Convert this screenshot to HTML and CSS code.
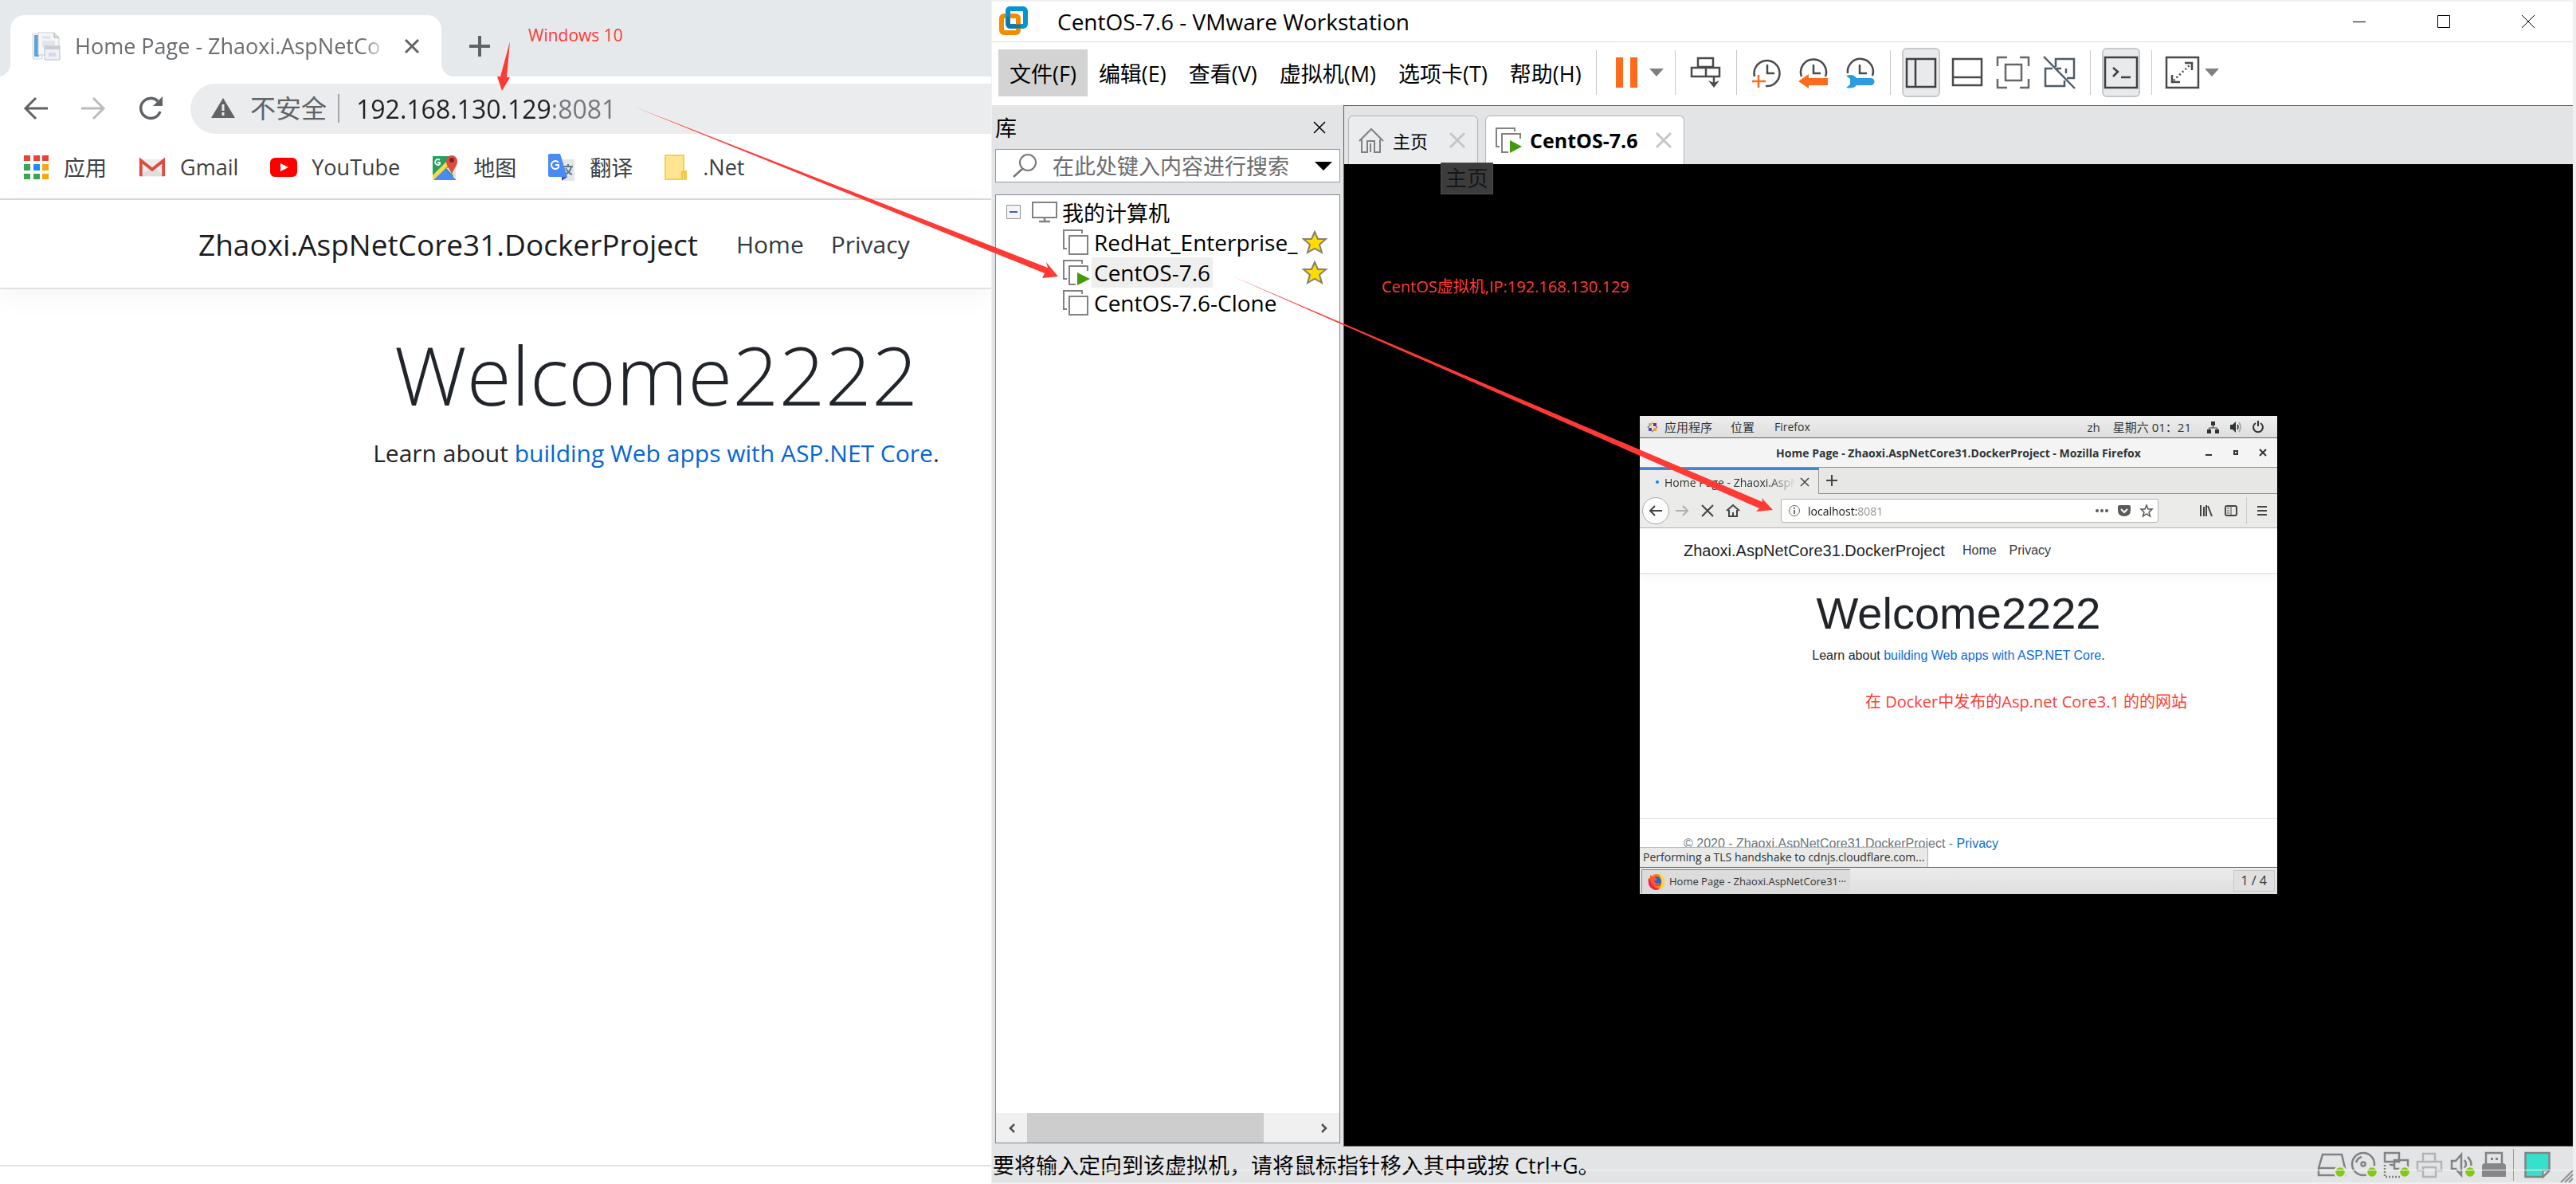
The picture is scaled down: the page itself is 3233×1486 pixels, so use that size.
FILE: index.html
```html
<!DOCTYPE html>
<html lang="zh-CN">
<head>
<meta charset="utf-8">
<title>CentOS-7.6 - VMware Workstation</title>
<link rel="stylesheet" href="styles.css">
</head>
<body>
<div class="desktop">

  <!-- Host browser -->
  <section class="chrome">
    <header class="tabstrip">
      <div class="tab">
        <svg class="favicon" viewBox="0 0 36 36"><path d="M1 2h12v32H1z" fill="#f3f6f8" stroke="#cdd5da"/><path d="M3 4h6v27H3z" fill="#5ea2d6"/><path d="M8 1h20l6 6v22H8z" fill="#f5f6f7" stroke="#c9ced2"/><path d="M28 1v6h6" fill="#ddd" stroke="#aaa"/><path d="M13 5h10v4H13zM13 11h16v8H13z" fill="#e1e5e8"/><path d="M16 18h19v17H16z" fill="#eef0f4" stroke="#b9bec8"/><path d="M16 18h19v4H16z" fill="#c9ccd2"/><path d="M21 26h9v5h-9z" fill="#d5d9ea"/></svg>
        <span class="tab-title">Home Page - Zhaoxi.AspNetCo</span>
        <button class="icon-btn" aria-label="关闭标签页"><svg width="20" height="20" viewBox="0 0 20 20"><path d="M2 2l16 16M18 2L2 18" stroke="#5f6368" stroke-width="3"/></svg></button>
      </div>
      <button class="icon-btn new-tab" aria-label="新标签页"><svg width="28" height="28" viewBox="0 0 28 28"><path d="M14 1v26M1 14h26" stroke="#5f6368" stroke-width="4"/></svg></button>
    </header>
    <div class="navbar">
      <button class="icon-btn" aria-label="后退"><svg width="30" height="30" viewBox="0 0 30 30"><path d="M30 15H3M15 2L2 15l13 13" fill="none" stroke="#5f6368" stroke-width="3"/></svg></button>
      <button class="icon-btn" aria-label="前进"><svg width="30" height="30" viewBox="0 0 30 30"><path d="M0 15h27M15 2l13 13-13 13" fill="none" stroke="#babcbe" stroke-width="3"/></svg></button>
      <button class="icon-btn" aria-label="刷新"><svg width="32" height="32" viewBox="0 0 32 32"><path d="M27 20A12.500 12.500 0 1 1 24 7" fill="none" stroke="#5f6368" stroke-width="3.500"/><path d="M30 1v12H18z" fill="#5f6368"/></svg></button>
      <div class="omnibox">
        <svg width="30" height="26" viewBox="0 0 30 26"><path d="M15 0l15 25H0z" fill="#5f6368"/><path d="M15 8v8M15 18v4" stroke="#ebecee" stroke-width="3"/></svg>
        <span class="insecure">不安全</span>
        <input class="url" type="text" aria-label="地址" value="192.168.130.129:8081">
      </div>
    </div>
    <nav class="bookmarks">
      <a href="#"><svg width="32" height="32" viewBox="0 0 32 32"><path fill="#ea4335" d="M0 1h8v7H0zM12 1h8v7h-8zM23 1h8v7h-8z"/><path fill="#34a853" d="M0 12h8v8H0zM0 24h8v7H0zM12 24h8v7h-8z"/><path fill="#1a8cff" d="M12 12h8v8h-8z"/><path fill="#f5a80c" d="M23 12h8v8h-8zM23 24h8v7h-8z"/></svg>应用</a>
      <a href="#"><svg width="34" height="32" viewBox="0 0 36 32"><path d="M2 5h32v23H2z" fill="#ececec"/><path d="M2 28l16-14 16 14z" fill="#dedede"/><path d="M3 28V7l15 12L33 7v21" fill="none" stroke="#dd4b3e" stroke-width="4"/></svg>Gmail</a>
      <a href="#"><svg width="34" height="32" viewBox="0 0 34 32"><rect y="4" width="34" height="24" rx="6" fill="#f00"/><path d="M13 11l10 5-10 5z" fill="#fff"/></svg>YouTube</a>
      <a href="#"><svg width="34" height="34" viewBox="0 0 34 34"><path d="M1 3h26v29H1z" fill="#25a05b"/><path d="M2 33l14-14 15 14z" fill="#4a8af4"/><path d="M1 27L23 5l4 4L2 33H1z" fill="#fbd74b"/><path d="M18 18l12 13V15z" fill="#dfe1e4"/><path d="M25 27c-1-8-7-10-7-18a7 7 0 0 1 14 0c0 8-6 10-7 18z" fill="#dc4b3e"/><circle cx="25" cy="8" r="3" fill="#7e251f"/><path d="M10 8a3.500 3.500 0 1 0 0 5v-2H7" fill="none" stroke="#fff" stroke-width="1.800"/></svg>地图</a>
      <a href="#"><svg width="34" height="36" viewBox="0 0 34 36"><path d="M12 8h21v27H20z" fill="#e4e6e8"/><path d="M0 3q0-2 2-2h13l9 29H2q-2 0-2-2z" fill="#4a8af4"/><path d="M17 30h7l-7 5z" fill="#3a55b5"/><path d="M13 12a5 5 0 1 0 0 6v-3H9" fill="none" stroke="#fff" stroke-width="2"/><path d="M20 17h11M25 14v3M29 17q-1 7-8 10M22 19q3 6 8 8" fill="none" stroke="#5c7d88" stroke-width="2"/></svg>翻译</a>
      <a href="#"><svg width="30" height="34" viewBox="0 0 30 34"><path d="M1 2h23v20h3v10H1z" fill="#ffe58f" stroke="#f5cf52" stroke-width="2"/><path d="M22 32v-9h3v9" fill="#ffe58f" stroke="#f0c53c" stroke-width="2"/></svg>.Net</a>
    </nav>
    <main class="site">
      <nav class="site-nav">
        <a class="brand" href="#">Zhaoxi.AspNetCore31.DockerProject</a>
        <a href="#">Home</a>
        <a href="#">Privacy</a>
      </nav>
      <div class="hero">
        <h1>Welcome2222</h1>
        <p>Learn about <a href="#">building Web apps with ASP.NET Core</a>.</p>
      </div>
    </main>
  </section>

  <!-- Virtual machine manager -->
  <section class="vmware">
    <header class="titlebar">
      <svg width="38" height="38" viewBox="0 0 38 38"><rect x="12" y="3" width="22" height="22" rx="3" fill="none" stroke="#0095d3" stroke-width="6"/><rect x="4" y="12" width="21" height="21" rx="3" fill="none" stroke="#f38b00" stroke-width="6"/><path d="M12 10v12q0 3 3 3h13" fill="none" stroke="#1574a8" stroke-width="5"/><path d="M12 13v-7q0-3 3-3h5" fill="none" stroke="#0095d3" stroke-width="6"/></svg>
      <span class="title">CentOS-7.6 - VMware Workstation</span>
      <div class="win-buttons">
        <button class="icon-btn" aria-label="最小化"><svg width="16" height="16" viewBox="0 0 16 16"><path d="M0 8.500h16" stroke="#000"/></svg></button>
        <button class="icon-btn" aria-label="最大化"><svg width="16" height="16" viewBox="0 0 16 16"><path d="M.5.5h15v15H.5z" fill="none" stroke="#000"/></svg></button>
        <button class="icon-btn" aria-label="关闭"><svg width="16" height="16" viewBox="0 0 16 16"><path d="M0 0l16 16M16 0L0 16" stroke="#000"/></svg></button>
      </div>
    </header>
    <div class="menubar">
      <button class="menu open">文件(F)</button>
      <button class="menu">编辑(E)</button>
      <button class="menu">查看(V)</button>
      <button class="menu">虚拟机(M)</button>
      <button class="menu">选项卡(T)</button>
      <button class="menu">帮助(H)</button>
      <div class="tools">
        <div class="group">
          <button class="tool" aria-label="挂起"><svg viewBox="0 0 42 42"><path d="M7 2h9v38H7zM25 2h9v38h-9z" fill="#ff6b1c"/></svg></button>
          <button class="caret" aria-label="电源选项"><svg width="18" height="10" viewBox="0 0 18 10"><path d="M0 0h18L9 10z" fill="#808080"/></svg></button>
        </div>
        <div class="group">
          <button class="tool" aria-label="发送 Ctrl+Alt+Del"><svg viewBox="0 0 42 42" fill="none" stroke="#4a4a4c" stroke-width="2.500"><path d="M11 3h19v11H11zM3 15h35v11H3zM21 15v11M31 26v11"/><path d="M24 31l7 9 7-9-7 3z" fill="#4a4a4c" stroke="none"/></svg></button>
        </div>
        <div class="group">
          <button class="tool" aria-label="拍摄快照"><svg viewBox="0 0 42 42" fill="none" stroke="#4a4a4c" stroke-width="2.500"><path d="M5 26a16 16 0 1 1 14 12M21 11v11h9"/><path d="M2 32h17M10 24v16" stroke="#ff6b1c"/></svg></button>
          <button class="tool" aria-label="恢复快照"><svg viewBox="0 0 42 42" fill="none" stroke="#4a4a4c" stroke-width="2.500"><path d="M6 26a16 16 0 1 1 30 0M21 11v11h9"/><path d="M2 32l13-9v5h24v9H15v4z" fill="#ff6b1c" stroke="none"/></svg></button>
          <button class="tool" aria-label="管理快照"><svg viewBox="0 0 42 42" fill="none" stroke="#4a4a4c" stroke-width="2.500"><path d="M6 22a16 16 0 1 1 31 3M21 11v11h9"/><path d="M4 25q9-3 13 3h18a4 4 0 0 1 0 9H17q-4 5-13 3l5-4v-7z" fill="#2b9ce0" stroke="none"/></svg></button>
        </div>
        <div class="group">
          <button class="tool on" aria-label="显示库"><svg viewBox="0 0 42 42" fill="none" stroke="#3f4042" stroke-width="2.500"><path d="M3 4h36v35H3zM14 4v35"/></svg></button>
          <button class="tool" aria-label="缩略图栏"><svg viewBox="0 0 42 42" fill="none" stroke="#4a4a4c" stroke-width="2.500"><path d="M3 4h36v33H3zM3 27h36"/></svg></button>
          <button class="tool" aria-label="控制台视图"><svg viewBox="0 0 42 42" fill="none" stroke="#66676a" stroke-width="2.500"><path d="M1 13V2h12M29 2h11v11M40 29v11H29M13 40H1V29M11 11h20v20H11z"/></svg></button>
          <button class="tool" aria-label="Unity"><svg viewBox="0 0 42 42" fill="none" stroke="#4f5b66" stroke-width="2.500"><path d="M16 14V4h23v24h-9M12 16H3v22h24v-7M17 16h6M29 22v-6M1 1l39 40"/></svg></button>
        </div>
        <div class="group">
          <button class="tool on" aria-label="控制台"><svg viewBox="0 0 42 42" fill="none" stroke="#3f4042" stroke-width="2.500"><path d="M1 2h40v38H1zM11 15l6 5-6 6M21 27h12"/></svg></button>
        </div>
        <div class="group">
          <button class="tool" aria-label="全屏"><svg viewBox="0 0 42 42" fill="none" stroke="#4a4a4c" stroke-width="2.500"><path d="M1 2h40v38H1zM24 9h9v9M8 24v9h10"/><path d="M10 31L32 10" stroke-dasharray="2 3"/></svg></button>
          <button class="caret" aria-label="拉伸选项"><svg width="18" height="10" viewBox="0 0 18 10"><path d="M0 0h18L9 10z" fill="#808080"/></svg></button>
        </div>
      </div>
    </div>

    <div class="workspace">
      <aside class="library">
        <div class="lib-head">库
          <button class="icon-btn" aria-label="关闭库"><svg width="16" height="16" viewBox="0 0 16 16"><path d="M1 1l14 14M15 1L1 15" stroke="#000" stroke-width="1.500"/></svg></button>
        </div>
        <div class="search">
          <svg width="32" height="30" viewBox="0 0 32 30"><circle cx="19" cy="11" r="10" fill="none" stroke="#777" stroke-width="2"/><path d="M12 19L1 29" stroke="#777" stroke-width="2.500"/></svg>
          <input type="text" aria-label="搜索" placeholder="在此处键入内容进行搜索">
          <button class="icon-btn" aria-label="搜索选项"><svg width="22" height="11" viewBox="0 0 22 11"><path d="M0 0h22L11 11z" fill="#000"/></svg></button>
        </div>
        <div class="tree">
          <div class="row root">
            <svg width="18" height="18" viewBox="0 0 18 18"><path d="M.5.5h17v17H.5z" fill="#f4f4f4" stroke="#919191"/><path d="M4 9h10" stroke="#4060b0" stroke-width="2"/></svg>
            <svg class="monitor" width="32" height="26" viewBox="0 0 32 26"><path d="M1 1h30v19H1z" fill="#fff" stroke="#828282" stroke-width="2"/><path d="M16 20v4M9 25h14" stroke="#828282" stroke-width="2.500"/></svg>
            <span>我的计算机</span>
          </div>
          <div class="row">
            <svg width="32" height="32" viewBox="0 0 32 32" fill="none" stroke="#828282" stroke-width="2"><path d="M5 24H1V1h23v4M8 8h23v23H8z"/></svg>
            <span class="name">RedHat_Enterprise_</span>
            <svg class="star" width="32" height="30" viewBox="0 0 32 30"><path d="M16 2l4 9h10l-8 7 3 10-9-5-9 5 3-10-8-7h10z" fill="#ffdc00" stroke="#857f6e" stroke-width="2"/></svg>
          </div>
          <div class="row">
            <svg width="32" height="32" viewBox="0 0 32 32" fill="none" stroke="#828282" stroke-width="2"><path d="M5 24H1V1h23v4M31 14V8H8v23h8"/><path d="M18 16l16 8-16 8z" fill="#449a0b" stroke="none"/></svg>
            <span class="name selected">CentOS-7.6</span>
            <svg class="star" width="32" height="30" viewBox="0 0 32 30"><path d="M16 2l4 9h10l-8 7 3 10-9-5-9 5 3-10-8-7h10z" fill="#ffdc00" stroke="#857f6e" stroke-width="2"/></svg>
          </div>
          <div class="row">
            <svg width="32" height="32" viewBox="0 0 32 32" fill="none" stroke="#828282" stroke-width="2"><path d="M5 24H1V1h23v4M8 8h23v23H8z"/></svg>
            <span class="name">CentOS-7.6-Clone</span>
          </div>
          <div class="scrollbar">
            <button class="icon-btn" aria-label="向左滚动"><svg width="8" height="12" viewBox="0 0 8 12"><path d="M7 1L2 6l5 5" fill="none" stroke="#505050" stroke-width="2.500"/></svg></button>
            <div class="track"><div class="thumb"></div></div>
            <button class="icon-btn" aria-label="向右滚动"><svg width="8" height="12" viewBox="0 0 8 12"><path d="M1 1l5 5-5 5" fill="none" stroke="#505050" stroke-width="2.500"/></svg></button>
          </div>
        </div>
      </aside>

      <div class="console">
        <div class="vm-tabs">
          <div class="vm-tab home">
            <svg width="32" height="32" viewBox="0 0 32 32" fill="none" stroke="#808080" stroke-width="2"><path d="M1 17L16 2l15 15M4 15v16h7V17h9v14h7V15M15 20v11"/></svg>
            <span>主页</span>
            <button class="icon-btn" aria-label="关闭主页"><svg width="20" height="20" viewBox="0 0 20 20"><path d="M1 1l18 18M19 1L1 19" stroke="#c6c6c8" stroke-width="3"/></svg></button>
            <div class="tooltip">主页</div>
          </div>
          <div class="vm-tab active">
            <svg width="32" height="32" viewBox="0 0 32 32" fill="none" stroke="#828282" stroke-width="2"><path d="M5 24H1V1h23v4M31 14V8H8v23h8"/><path d="M18 16l15 8-15 8z" fill="#449a0b" stroke="none"/></svg>
            <span>CentOS-7.6</span>
            <button class="icon-btn" aria-label="关闭 CentOS-7.6"><svg width="20" height="20" viewBox="0 0 20 20"><path d="M1 1l18 18M19 1L1 19" stroke="#c6c6c8" stroke-width="3"/></svg></button>
          </div>
        </div>
        <div class="screen">
          <div class="guest">
            <div class="g-panel">
              <svg width="14" height="14" viewBox="0 0 14 14"><path d="M7 0l2 3H5z" fill="#e8b53a"/><path d="M2 2h4v4H2z" fill="#a6c957"/><path d="M8 2h4v4H8z" fill="#932279"/><path d="M2 8h4v4H2z" fill="#4a4a98"/><path d="M8 8h4v4H8z" fill="#efa724"/><path d="M7 14l2-3H5zM0 7l3-2v4zM14 7l-3-2v4z" fill="#b070a8"/></svg>
              <span>应用程序</span><span>位置</span><span class="app">Firefox</span>
              <span class="zh">zh</span><span class="clock">星期六 01：21</span>
              <svg width="16" height="16" viewBox="0 0 16 16"><path d="M5 1h5v5H5zM0 11h5v5H0zM10 11h5v5h-5z" fill="#2e3436"/><path d="M7.500 5v4M2.500 12V9h10v3" fill="none" stroke="#2e3436"/></svg>
              <svg width="16" height="16" viewBox="0 0 16 16"><path d="M1 5h3l4-4v14l-4-4H1z" fill="#2e3436"/><path d="M10 5q2 3 0 6" fill="none" stroke="#2e3436" stroke-width="1.500"/><path d="M12 2q4 6 0 12" fill="none" stroke="#aaa" stroke-width="2"/></svg>
              <svg width="16" height="16" viewBox="0 0 16 16"><path d="M5 3a6 6 0 1 0 6 0M8 0v7" fill="none" stroke="#2e3436" stroke-width="2"/></svg>
            </div>
            <div class="g-title"><span>Home Page - Zhaoxi.AspNetCore31.DockerProject - Mozilla Firefox</span>
              <div class="g-controls">
                <button class="icon-btn" aria-label="最小化"><svg width="8" height="8" viewBox="0 0 8 8"><path d="M0 7h8" stroke="#2e3436" stroke-width="2"/></svg></button>
                <button class="icon-btn" aria-label="最大化"><svg width="8" height="8" viewBox="0 0 8 8"><path d="M2 2h4v4H2z" fill="none" stroke="#2e3436" stroke-width="2"/></svg></button>
                <button class="icon-btn" aria-label="关闭"><svg width="8" height="8" viewBox="0 0 8 8"><path d="M0 0l8 8M8 0L0 8" stroke="#2e3436" stroke-width="2"/></svg></button>
              </div>
            </div>
            <div class="g-tabs">
              <div class="g-tab"><i class="dot"></i><span>Home Page - Zhaoxi.AspN</span>
                <button class="icon-btn" aria-label="关闭标签页"><svg width="10" height="10" viewBox="0 0 10 10"><path d="M0 0l10 10M10 0L0 10" stroke="#444" stroke-width="1.500"/></svg></button></div>
              <div class="g-tabfill"><button class="icon-btn" aria-label="新标签页"><svg width="14" height="14" viewBox="0 0 14 14"><path d="M7 0v14M0 7h14" stroke="#444" stroke-width="2"/></svg></button></div>
            </div>
            <div class="g-toolbar">
              <button class="g-back" aria-label="后退"><svg width="18" height="16" viewBox="0 0 18 16"><path d="M17 8H2M8 2L2 8l6 6" fill="none" stroke="#444" stroke-width="2"/></svg></button>
              <button class="icon-btn" aria-label="前进"><svg width="16" height="16" viewBox="0 0 16 16"><path d="M0 8h15M9 2l6 6-6 6" fill="none" stroke="#b0b0b0" stroke-width="2"/></svg></button>
              <button class="icon-btn" aria-label="停止"><svg width="16" height="16" viewBox="0 0 16 16"><path d="M1 1l14 14M15 1L1 15" stroke="#444" stroke-width="2"/></svg></button>
              <button class="icon-btn" aria-label="主页"><svg width="16" height="16" viewBox="0 0 16 16"><path d="M0 8l8-7 8 7M3 7v8h10V7M8 15v-5" fill="none" stroke="#444" stroke-width="2"/></svg></button>
              <div class="g-url">
                <svg width="14" height="14" viewBox="0 0 14 14"><circle cx="7" cy="7" r="6.500" fill="none" stroke="#666"/><path d="M7 6v5M7 3v2" stroke="#444" stroke-width="1.500"/></svg>
                <input type="text" aria-label="地址" value="localhost:8081">
                <svg width="16" height="16" viewBox="0 0 16 16" fill="#555"><circle cx="2" cy="8" r="2"/><circle cx="8" cy="8" r="2"/><circle cx="14" cy="8" r="2"/></svg>
                <svg width="16" height="16" viewBox="0 0 16 16"><path d="M0 3q0-2 2-2h12q2 0 2 2v4q0 8-8 8T0 7z" fill="#5a5a5a"/><path d="M4 6l4 4 4-4" fill="none" stroke="#fff" stroke-width="2"/></svg>
                <svg width="16" height="16" viewBox="0 0 16 16"><path d="M8 1l2 5h5l-4 4 1.500 5L8 12l-4.500 3L5 10 1 6h5z" fill="none" stroke="#555" stroke-width="1.500"/></svg>
              </div>
              <div class="g-right">
                <svg width="16" height="16" viewBox="0 0 16 16"><path d="M1 1v14M5 3v12M8 1v14M10 2l5 13" fill="none" stroke="#444" stroke-width="2"/></svg>
                <svg width="16" height="16" viewBox="0 0 16 16"><rect x="1" y="2" width="14" height="12" rx="2" fill="none" stroke="#444" stroke-width="2"/><path d="M8 2v12M3 5h3M3 8h3M3 11h3" stroke="#444"/></svg>
                <button class="g-menu" aria-label="菜单"><svg width="12" height="14" viewBox="0 0 12 14"><path d="M0 2h12M0 7h12M0 12h12" stroke="#444" stroke-width="2"/></svg></button>
              </div>
            </div>
            <div class="g-page">
              <nav class="g-nav"><a class="g-brand" href="#">Zhaoxi.AspNetCore31.DockerProject</a><a href="#">Home</a><a href="#">Privacy</a></nav>
              <div class="g-hero">
                <h2>Welcome2222</h2>
                <p>Learn about <a href="#">building Web apps with ASP.NET Core</a>.</p>
              </div>
              <footer class="g-footer">© 2020 - Zhaoxi.AspNetCore31.DockerProject - <a href="#">Privacy</a></footer>
              <div class="g-status">Performing a TLS handshake to cdnjs.cloudflare.com...</div>
            </div>
            <div class="g-taskbar">
              <button class="g-task"><svg width="22" height="24" viewBox="0 0 22 24"><circle cx="11" cy="13" r="10" fill="#ff7a18"/><path d="M14 1q8 6 7 13-1 8-9 9 7-5 5-12z" fill="#ffd92e"/><path d="M1 8q-2 12 8 15 4 0 6-2-9 0-9-9z" fill="#f0244e"/><circle cx="11" cy="12" r="6" fill="#2a62d8"/><path d="M3 4q2 3 6 3l3 3-4 2q2 4 7 2-3 6-9 2Q2 12 3 4z" fill="#ff5a22"/></svg>Home Page - Zhaoxi.AspNetCore31···</button>
              <span class="g-ws">1 / 4</span>
            </div>
          </div>
        </div>
      </div>
    </div>

    <footer class="statusbar">
      <span>要将输入定向到该虚拟机，请将鼠标指针移入其中或按 Ctrl+G。</span>
      <div class="devices">
        <svg viewBox="0 0 36 34" fill="none" stroke="#828282" stroke-width="2.500"><path d="M7 4h24l4 17v9H2v-9zM2 21h33"/><circle cx="29" cy="26" r="7" fill="#84c817" stroke="#e3e4e6"/></svg>
        <svg viewBox="0 0 36 34" fill="none" stroke="#828282" stroke-width="2.500"><circle cx="17" cy="16" r="14"/><circle cx="17" cy="16" r="2.500"/><path d="M8 14q2-6 7-7"/><circle cx="28" cy="26" r="7" fill="#84c817" stroke="#e3e4e6"/></svg>
        <svg viewBox="0 0 36 34" fill="none" stroke="#828282" stroke-width="2.500"><path d="M3 2h18v11H3zM15 11h17v11H15zM9 17h6"/><path d="M3 17v15h20" stroke-dasharray="2 2"/><circle cx="28" cy="26" r="7" fill="#84c817" stroke="#e3e4e6"/></svg>
        <svg viewBox="0 0 36 34" fill="none" stroke="#b4b4b6" stroke-width="2.500"><path d="M10 13V3h15v10M10 24H3V13h30v11h-7M10 20h16v12H10z"/></svg>
        <svg viewBox="0 0 36 34" fill="none" stroke="#828282" stroke-width="2.500"><path d="M5 12h5l7-8v26l-7-8H5zM21 11q4 5 0 10M25 7q6 6 4 12"/><circle cx="28" cy="26" r="7" fill="#84c817" stroke="#e3e4e6"/></svg>
        <svg viewBox="0 0 36 34"><path d="M7 15V2h20v13" fill="none" stroke="#828282" stroke-width="2.500"/><path d="M13 8h3v3h-3zM19 8h3v3h-3z" fill="#828282"/><path d="M2 19q0-4 4-4h22q4 0 4 4v13H2z" fill="#87878b"/></svg>
        <svg class="note" viewBox="0 0 36 34"><path d="M3 2h30v22l-8 8H3z" fill="#35e0cc" stroke="#828282" stroke-width="2.500"/><path d="M33 24h-8v8z" fill="#e3e4e6" stroke="#828282" stroke-width="2"/></svg>
      </div>
      <svg class="grip" width="16" height="16" viewBox="0 0 16 16"><path d="M1 16L16 1M6 16L16 6M11 16l5-5" stroke="#909090" stroke-width="2"/></svg>
    </footer>
  </section>

  <!-- Annotations -->
  <p class="note-text note-host">Windows 10</p>
  <p class="note-text note-vm">CentOS虚拟机,IP:192.168.130.129</p>
  <p class="note-text note-site">在 Docker中发布的Asp.net Core3.1 的的网站</p>
  <svg class="arrows" width="2300" height="700" viewBox="0 0 2300 700" fill="#ff3a35"><path d="M640 52L636 97h4l-10 17-6-18h4z"/><path d="M796 134L1315 336l-2-7 15 18-20 2 3-6z"/><path d="M1545 346L2212 630l-1-5 14 15-21 2 4-4z"/></svg>
</div>
</body>
</html>
```
FILE: styles.css
```css
* { box-sizing: border-box; }
body {
  margin: 0;
  font-family: "Open Sans", "Noto Sans CJK SC", sans-serif;
  color: #000;
}
button, input { font: inherit; color: inherit; border: 0; padding: 0; margin: 0; background: none; }
h1, h2, p { margin: 0; }
a { text-decoration: none; color: inherit; }
svg { display: block; flex: none; overflow: visible; }
.icon-btn { display: flex; align-items: center; justify-content: center; flex: none; }

.desktop {
  position: relative;
  display: grid;
  grid-template-columns: 1244fr 1989fr;
  min-height: 100vh;
  overflow: hidden;
  white-space: nowrap;
}

/* Host browser */
.chrome { display: flex; flex-direction: column; min-width: 0; overflow: hidden; background: #fff; padding-bottom: 22px; }
.tabstrip { display: flex; align-items: flex-end; height: 96px; padding-left: 13px; background: #e6e9ec; }
.tab {
  position: relative;
  display: flex;
  align-items: center;
  width: 541px;
  height: 77px;
  padding: 0 27px;
  gap: 18px;
  border-radius: 18px 18px 0 0;
  background: #fff;
}
.tab::before, .tab::after { content: ""; position: absolute; bottom: 0; width: 16px; height: 16px; }
.tab::before { left: -16px; background: radial-gradient(circle at 0 0, #e6e9ec 16px, #fff 16px); }
.tab::after { right: -16px; background: radial-gradient(circle at 100% 0, #e6e9ec 16px, #fff 16px); }
.favicon { width: 36px; height: 36px; }
.tab-title {
  flex: 1;
  min-width: 0;
  overflow: hidden;
  font-size: 27px;
  color: #6a6d71;
  -webkit-mask-image: linear-gradient(90deg, #000 360px, transparent 394px);
  mask-image: linear-gradient(90deg, #000 360px, transparent 394px);
}
.new-tab { height: 77px; margin-left: 34px; }
.navbar { display: flex; align-items: center; height: 80px; padding-left: 30px; gap: 42px; }
.omnibox {
  display: flex;
  align-items: center;
  flex: 1;
  height: 63px;
  margin-left: -9px;
  padding-left: 26px;
  border-radius: 32px 0 0 32px;
  background: #ebecee;
}
.insecure { margin-left: 19px; padding-right: 14px; border-right: 2px solid #a3a5a8; font-size: 32px; line-height: 36px; color: #5f6368; }
.url {
  flex: 1;
  min-width: 0;
  margin-left: 21px;
  font-size: 32px;
  color: transparent;
  background: linear-gradient(90deg, #202124 244px, #73767a 244px);
  -webkit-background-clip: text;
  background-clip: text;
}
.bookmarks { display: flex; align-items: center; height: 75px; padding: 0 0 6px 30px; gap: 40px; border-bottom: 2px solid #d8dade; font-size: 27px; color: #3c4043; }
.bookmarks a { display: flex; align-items: center; gap: 18px; }
.site { flex: 1; border-bottom: 2px solid #dfe3e8; }
.site-nav {
  display: flex;
  align-items: center;
  height: 112px;
  padding: 0 0 0 249px;
  gap: 34px;
  border-bottom: 2px solid #dee2e6;
  box-shadow: 0 8px 32px rgba(0, 0, 0, .05);
  font-size: 30px;
  color: #343a40;
}
.brand { margin-right: 14px; font-size: 37px; color: #1b1c1e; }
.hero { padding: 31px 0 0 403px; text-align: center; color: #212529; }
.hero h1 { font-size: 102px; font-weight: 300; line-height: 152px; }
.hero p { font-size: 30px; line-height: 46px; }
.hero a { color: #0366d6; }

/* Virtual machine manager */
.vmware { display: flex; flex-direction: column; min-width: 0; background: #e3e4e6; border: solid #f0f0f2; border-width: 2px 4px 2px 1px; }
.titlebar { display: flex; align-items: center; height: 51px; padding-left: 8px; background: #fff; border-bottom: 1px solid #e0e0e0; font-size: 28px; }
.title { margin-left: 36px; line-height: 48px; }
.win-buttons { display: flex; gap: 90px; margin-left: auto; padding-right: 48px; }
.menubar { display: flex; align-items: center; height: 79px; padding: 0 0 3px 8px; background: #fff; font-size: 27px; }
.menu { flex: none; height: 59px; padding: 0 14px; }
.menu.open { background: #d3d3d3; }
.tools { display: flex; align-items: center; margin-left: 4px; }
.group { display: flex; align-items: center; height: 56px; padding: 0 14px; gap: 10px; border-left: 1px solid #c8c8c8; }
.tool { display: flex; align-items: center; justify-content: center; width: 48px; height: 62px; border: 2px solid transparent; border-radius: 6px; }
.tool svg { width: 42px; height: 42px; }
.tool.on { background: #e9eaec; border-color: #c8c9ca; }
.caret { margin-left: -6px; }

.workspace { flex: 1; display: flex; min-height: 0; }
.library { display: flex; flex-direction: column; width: 441px; flex: none; padding: 0 4px 4px; }
.lib-head { display: flex; align-items: center; justify-content: space-between; height: 55px; padding-right: 18px; font-size: 27px; }
.search { display: flex; align-items: center; height: 42px; padding: 0 9px 0 21px; background: #fff; border: 1px solid #9a9a9a; }
.search input { flex: 1; min-width: 0; margin-left: 18px; font-size: 27px; }
.search input::placeholder { color: #6d6d6d; opacity: 1; }
.tree { flex: 1; display: flex; flex-direction: column; margin-top: 15px; padding-top: 2px; background: #fff; border: 1px solid #828790; font-size: 28px; }
.row { display: flex; align-items: center; height: 38px; padding: 0 15px 0 84px; }
.row.root { padding-left: 13px; font-size: 27px; }
.monitor { margin: 0 6px 0 14px; }
.name { margin-left: 4px; padding: 0 3px; line-height: 38px; }
.selected { background: #eee; }
.star { margin-left: auto; }
.scrollbar { display: flex; height: 37px; margin-top: auto; background: #f0f0f0; }
.scrollbar .icon-btn { width: 39px; }
.track { flex: 1; }
.thumb { width: 84%; height: 100%; background: #cdcdcd; }

.console { flex: 1; display: flex; flex-direction: column; min-width: 0; border: solid #5c5c5e; border-width: 1px 0 1px 1px; }
.vm-tabs { display: flex; align-items: flex-end; gap: 9px; height: 73px; padding-left: 5px; }
.vm-tab { position: relative; display: flex; align-items: center; height: 61px; padding: 0 15px 0 12px; border: 1px solid #b4b4b6; border-bottom: 0; border-radius: 6px 6px 0 0; }
.vm-tab.home { background: #ebecee; font-size: 22px; gap: 11px; }
.vm-tab.home .icon-btn { margin-left: 16px; }
.vm-tab.active { background: #fff; font-size: 25px; font-weight: 700; gap: 11px; }
.vm-tab.active .icon-btn { margin-left: 12px; }
.tooltip {
  position: absolute;
  left: 115px;
  top: 58px;
  z-index: 1;
  padding: 0 5px;
  line-height: 38px;
  font-size: 27px;
  color: #161616;
  background: #3c3c3c;
  border: 1px solid #4c4c4c;
}
.screen { flex: 1; display: flex; align-items: center; justify-content: center; background: #000; }

/* Guest desktop */
.guest { display: flex; flex-direction: column; width: 800px; height: 600px; background: #fff; color: #2e3436; font-size: 14px; overflow: hidden; }
.g-panel { display: flex; align-items: center; height: 28px; padding: 0 16px 0 9px; background: linear-gradient(#eee, #dedede); border-bottom: 1px solid #666; font-size: 15px; }
.g-panel span { margin-left: 23px; }
.g-panel .app { margin-left: 25px; font-size: 14px; }
.g-panel svg + span { margin-left: 8px; }
.g-panel .zh { margin-left: auto; }
.g-panel .clock { margin: 0 20px 0 16px; }
.g-panel svg + svg { margin-left: 12px; }
.g-title { position: relative; display: flex; align-items: center; justify-content: center; height: 37px; background: #f4f4f4; border-bottom: 1px solid #8e8f8c; font-weight: 700; }
.g-controls { position: absolute; right: 14px; display: flex; gap: 26px; }
.g-tabs { display: flex; height: 33px; background: #e7e7e5; }
.g-tab { display: flex; align-items: center; width: 225px; padding: 0 12px 0 20px; gap: 7px; background: #ebebe9; border-top: 3px solid #3e87d2; border-right: 1px solid #999; }
.g-tab span { flex: 1; min-width: 0; overflow: hidden; -webkit-mask-image: linear-gradient(90deg, #000 130px, transparent 166px); mask-image: linear-gradient(90deg, #000 130px, transparent 166px); }
.dot { width: 4px; height: 4px; border-radius: 2px; background: #0a84ff; }
.g-tabfill { flex: 1; display: flex; padding-left: 9px; border-bottom: 1px solid #8e8f8c; }
.g-toolbar { display: flex; align-items: center; height: 43px; padding: 0 13px 0 3px; gap: 16px; background: #ebebe9; border-bottom: 1px solid #b4b4b0; }
.g-back { display: flex; align-items: center; justify-content: center; width: 34px; height: 34px; margin-right: -8px; border: 1px solid #aaa; border-radius: 50%; background: #fcfcfc; }
.g-url { flex: 1; display: flex; align-items: center; height: 30px; margin-left: 36px; padding: 0 6px 0 9px; gap: 12px; background: #fff; border: 1px solid #b4b4b0; border-radius: 3px; }
.g-url input {
  flex: 1;
  min-width: 0;
  margin-left: -2px;
  color: transparent;
  background: linear-gradient(90deg, #111 61px, #8a8a8a 61px);
  -webkit-background-clip: text;
  background-clip: text;
}
.g-right { display: flex; align-items: center; gap: 15px; margin-left: 36px; }
.g-menu { height: 34px; margin-left: -4px; padding-left: 13px; border-left: 1px solid #ccc; }
.g-page { position: relative; flex: 1; min-height: 0; display: flex; flex-direction: column; overflow: hidden; font-family: "Liberation Sans", Arial, sans-serif; font-size: 16px; color: #212529; }
.g-nav { display: flex; align-items: center; flex: none; height: 57px; padding-left: 55px; gap: 16px; border-bottom: 1px solid #dee2e6; box-shadow: 0 4px 12px rgba(0, 0, 0, .05); color: #343a40; }
.g-brand { margin-right: 6px; font-size: 20px; color: #212529; }
.g-hero { padding-top: 16px; text-align: center; }
.g-hero h2 { font-size: 56px; font-weight: 400; line-height: 67px; margin-bottom: 8px; }
.g-hero p { line-height: 24px; }
.g-hero a, .g-footer a { color: #0b6cdc; }
.g-footer { flex: none; height: 61px; margin-top: auto; padding-left: 55px; border-top: 1px solid #dee2e6; line-height: 62px; color: #6c757d; }
.g-status {
  position: absolute;
  left: 0;
  bottom: 0;
  height: 25px;
  padding: 0 4px;
  line-height: 24px;
  background: #e9e9e7;
  border: solid #b4b4b0;
  border-width: 1px 1px 0 0;
  font-family: "Open Sans", sans-serif;
  font-size: 14px;
  color: #2e3436;
}
.g-taskbar { display: flex; align-items: center; justify-content: space-between; height: 34px; padding: 0 3px 0 2px; background: linear-gradient(#ececec, #dedede); border-top: 1px solid #555; }
.g-task { display: flex; align-items: center; width: 262px; height: 30px; padding-left: 7px; gap: 5px; overflow: hidden; font-size: 13px; background: #dcdcdc; border: solid #8a8a8a; border-width: 1px 0 0 1px; }
.g-ws { padding: 0 9px; line-height: 25px; font-size: 16px; border: 1px solid #c8c8c8; background: #e0e0e0; }

.statusbar { position: relative; display: flex; align-items: center; height: 45px; padding-left: 1px; font-size: 27px; }
.statusbar::after { content: ""; position: absolute; left: 0; right: 0; top: 29px; height: 1px; background: #f6f6f6; }
.devices { display: flex; gap: 5px; margin-left: auto; padding-right: 25px; }
.devices svg { width: 36px; height: 34px; }
.devices .note { width: 50px; height: 40px; margin: -3px 0; padding: 3px 0 3px 10px; border-left: 1px solid #999; }
.grip { position: absolute; right: 0; bottom: 0; }

/* Annotations lie over both windows */
.note-text { position: absolute; font-size: 20px; line-height: 32px; color: #ff3a35; }
.note-host { left: 663px; top: 28px; font-size: 21px; }
.note-vm { left: 1734px; top: 344px; }
.note-site { left: 2341px; top: 865px; }
.arrows { position: absolute; left: 0; top: 0; pointer-events: none; }
```
